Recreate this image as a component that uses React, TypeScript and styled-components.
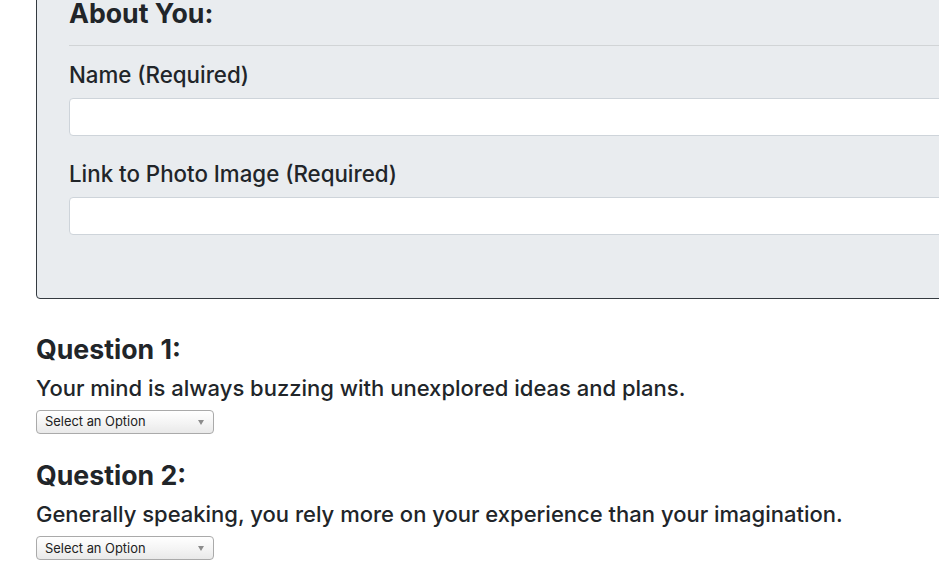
import React from 'react';
import styled, { createGlobalStyle } from 'styled-components';

const GlobalStyle = createGlobalStyle`
  html, body {
    margin: 0;
    padding: 0;
    background: #fff;
    overflow: hidden;
  }
  body {
    font-family: Inter, "Noto Sans", "Liberation Sans", sans-serif;
    color: #212529;
  }
`;

const Page = styled.div`
  padding-left: 36px;
  width: 1100px;
`;

const Panel = styled.div`
  margin-top: -36px;
  padding: 32px 32px 63px;
  background: #e9ecef;
  border: 1px solid #343a40;
  border-radius: 4px;
`;

const SectionTitle = styled.h3`
  margin: 0;
  font-size: 26.7px;
  font-weight: 700;
  line-height: 1.2;
`;

const Rule = styled.hr`
  margin: 16px 0 16px;
  border: 0;
  border-top: 1px solid rgba(0, 0, 0, 0.1);
`;

const Group = styled.div<{ last?: boolean }>`
  margin-bottom: ${(p) => (p.last ? '0' : '25px')};
`;

const Label = styled.label`
  display: block;
  margin-bottom: 9px;
  font-size: 22.3px;
  font-weight: 500;
  line-height: 1.2;
`;

const TextInput = styled.input`
  display: block;
  box-sizing: border-box;
  width: 100%;
  height: 38px;
  padding: 6px 12px;
  font-family: inherit;
  font-size: 16px;
  background: #fff;
  border: 1px solid #ced4da;
  border-radius: 4px;
  outline: none;
`;

const Question = styled.section`
  margin-top: 34px;

  & + & {
    margin-top: 25px;
  }
`;

const Prompt = styled.h5`
  margin: 10px 0 0;
  font-size: 22px;
  font-weight: 500;
  line-height: 1.2;
`;

const SelectWrap = styled.div`
  position: relative;
  display: inline-block;
  margin-top: 9px;
  vertical-align: top;
`;

const Select = styled.select`
  appearance: none;
  display: block;
  box-sizing: border-box;
  width: 178px;
  height: 24px;
  padding: 0 24px 0 8px;
  font-family: Inter, "Liberation Sans", Arial, sans-serif;
  font-size: 12.9px;
  color: #222;
  background: linear-gradient(#ffffff, #f4f4f4 55%, #e9e9e9);
  border: 1px solid #aaaaaa;
  border-radius: 4px;
  outline: none;
`;

const Arrow = styled.span`
  position: absolute;
  right: 10px;
  top: 10px;
  width: 0;
  height: 0;
  border-left: 3px solid transparent;
  border-right: 3px solid transparent;
  border-top: 5px solid #8c8c8c;
  pointer-events: none;
`;

const questions = [
  'Your mind is always buzzing with unexplored ideas and plans.',
  'Generally speaking, you rely more on your experience than your imagination.',
];

const App: React.FC = () => {
  return (
    <>
      <GlobalStyle />
      <Page>
        <Panel>
          <SectionTitle>About You:</SectionTitle>
          <Rule />
          <Group>
            <Label>Name (Required)</Label>
            <TextInput />
          </Group>
          <Group last>
            <Label>Link to Photo Image (Required)</Label>
            <TextInput />
          </Group>
        </Panel>
        {questions.map((q, i) => (
          <Question key={i}>
            <SectionTitle>Question {i + 1}:</SectionTitle>
            <Prompt>{q}</Prompt>
            <SelectWrap>
              <Select defaultValue="">
                <option value="">Select an Option</option>
                <option>1 (Strongly Disagree)</option>
                <option>2</option>
                <option>3</option>
                <option>4</option>
                <option>5 (Strongly Agree)</option>
              </Select>
              <Arrow />
            </SelectWrap>
          </Question>
        ))}
      </Page>
    </>
  );
};

export default App;
